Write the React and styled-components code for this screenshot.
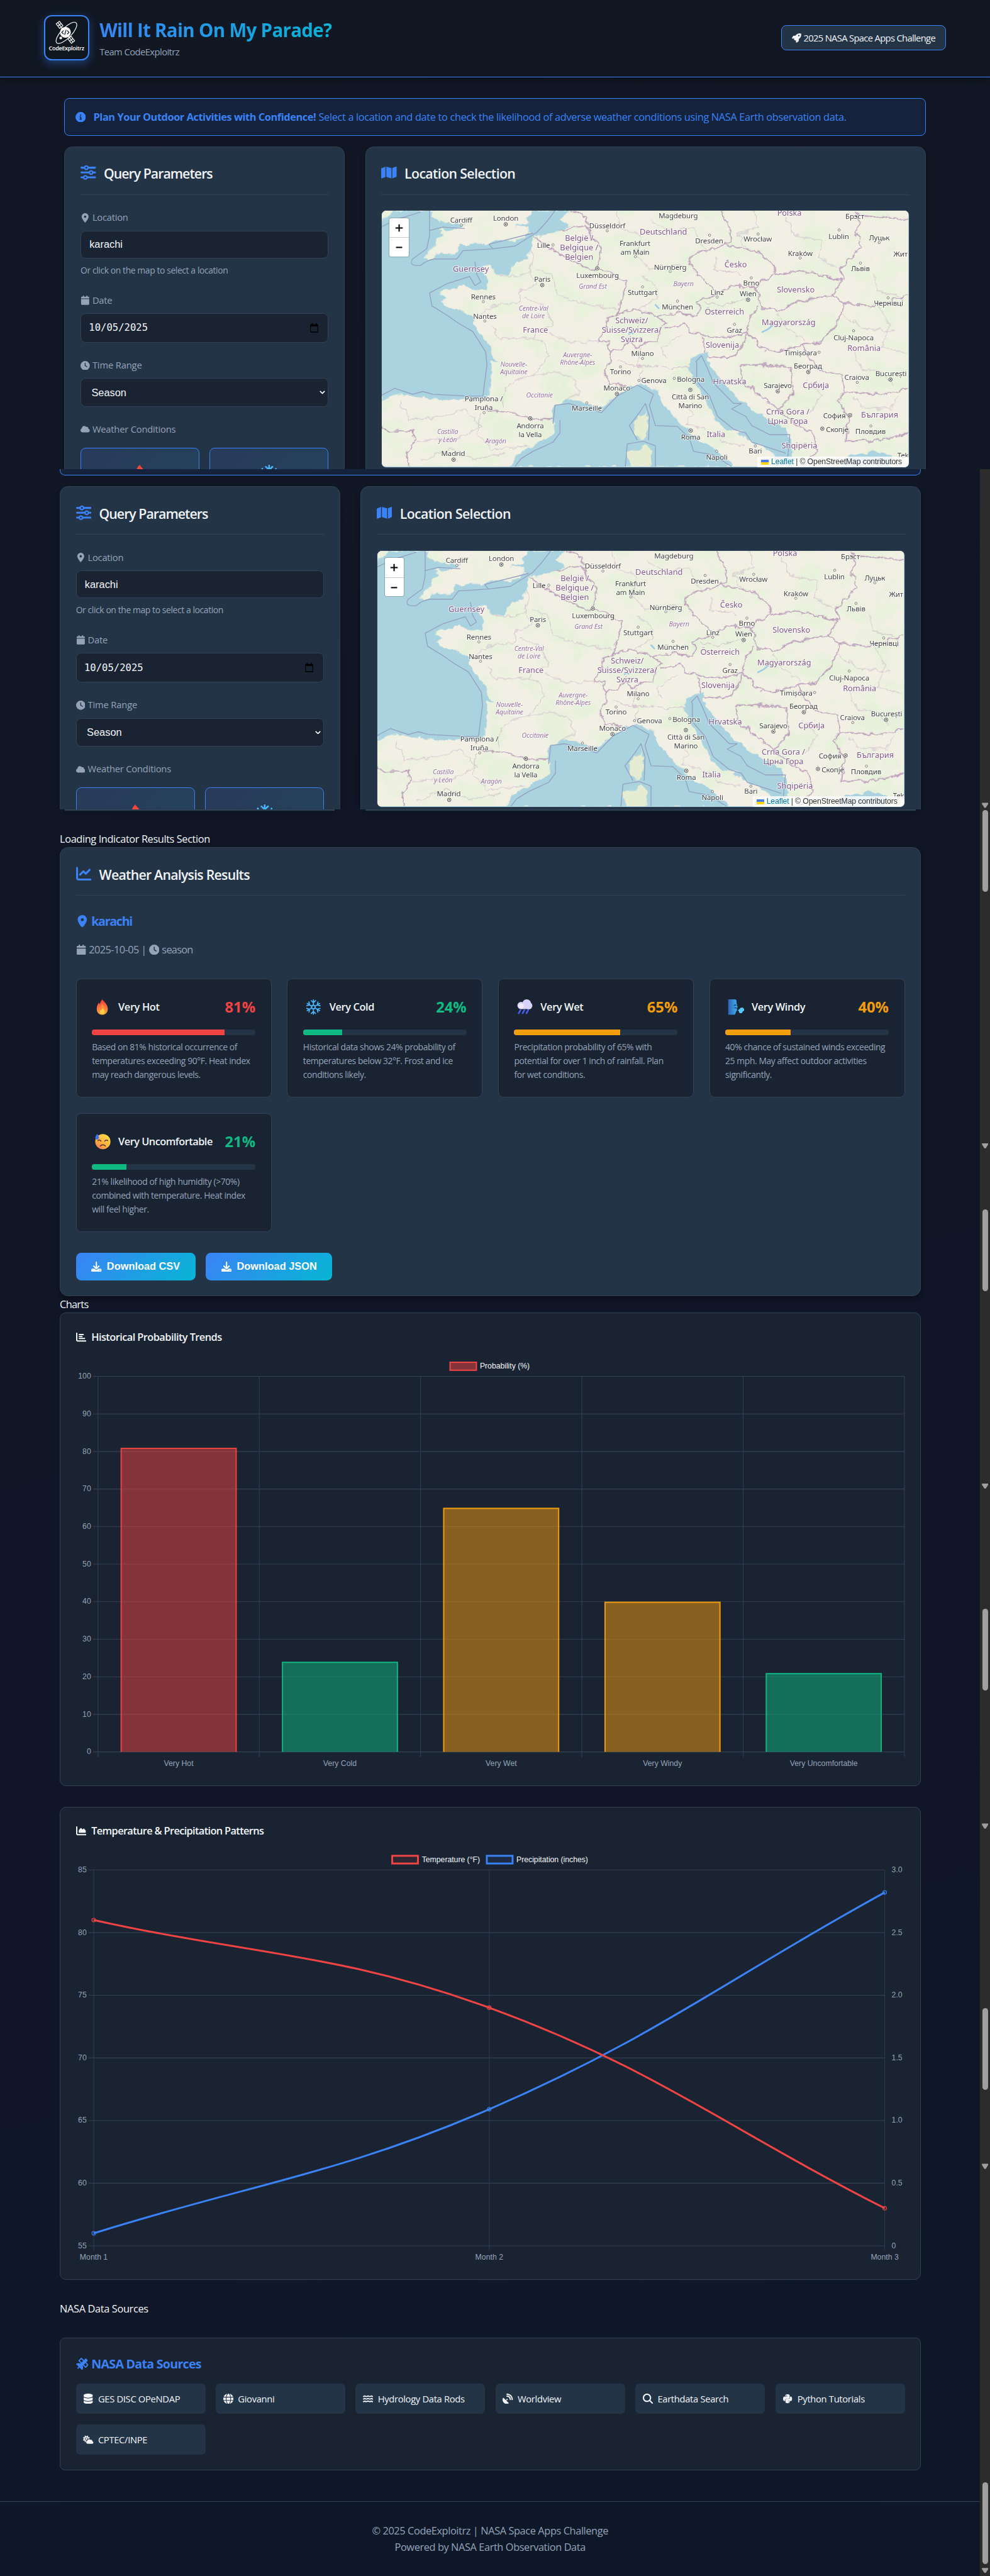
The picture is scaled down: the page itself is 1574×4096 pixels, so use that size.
import React from "react";
import styled, { createGlobalStyle } from "styled-components";
import {
  FaSliders, FaMap, FaLocationDot, FaCalendar, FaClock, FaCloud, FaRocket, FaCircleInfo,
  FaChartLine, FaDownload, FaChartBar, FaChartArea, FaSatellite, FaDatabase, FaGlobe,
  FaWater, FaSatelliteDish, FaMagnifyingGlass, FaPython, FaCloudSun,
} from "react-icons/fa6";

const c = {
  blue: "#3b82f6",
  cyan: "#06b6d4",
  card: "#243447",
  dark: "#1a2332",
  line: "#314256",
  text: "#f1f5f9",
  muted: "#94a3b8",
  red: "#ef4444",
  orange: "#f59e0b",
  green: "#10b981",
};
const sans = `"Open Sans", "Noto Sans", sans-serif`;
const arial = `"Liberation Sans", Arial, sans-serif`;

const Global = createGlobalStyle`
  *, *::before, *::after { box-sizing: border-box; }
  body { margin: 0; background: #0f1728; overflow: hidden; }
  h1, h2, h3, p { margin: 0; }
`;

const Page = styled.div`
  zoom: 0.81979;
  width: 1920px;
  height: 4997px;
  background: linear-gradient(165deg, #111824 0%, #101625 30%, #101628 70%, #0e1829 100%);
  color: ${c.text};
  font-family: ${sans};
  font-size: 20px;
  line-height: 32px;
  white-space: nowrap;
  svg.i { height: 1em; width: auto; flex: none; display: block; }
`;

const Text = styled.span`
  letter-spacing: ${(p) => p.$ls || 0}em;
`;

/* ---------- header ---------- */
const Header = styled.header`
  height: 150px;
  padding: 0 85px 2px;
  display: flex;
  align-items: center;
  background: #111824;
  border-bottom: 2px solid ${c.blue};
  box-shadow: 0 4px 14px rgba(0, 0, 0, 0.4);
  position: relative;
`;
const Logo = styled.div`
  width: 88px;
  height: 88px;
  border: 3px solid ${c.blue};
  border-radius: 15px;
  background: #0f1821;
  box-shadow: 0 5px 16px rgba(59, 130, 246, 0.35);
  display: flex;
  overflow: hidden;
`;
const Brand = styled.div`
  margin-left: 20px;
  flex: 1;
`;
const Title = styled.h1`
  width: max-content;
  font-size: 36px;
  line-height: 54px;
  font-weight: 700;
  letter-spacing: -0.0235em;
  background: linear-gradient(135deg, ${c.blue}, ${c.cyan});
  -webkit-background-clip: text;
  background-clip: text;
  color: transparent;
`;
const Team = styled.p`
  padding-top: 1px;
  font-size: 18px;
  line-height: 28px;
  letter-spacing: -0.038em;
  color: ${c.muted};
`;
const Badge = styled.div`
  display: flex;
  align-items: center;
  gap: 4px;
  width: 320px;
  height: 49px;
  padding: 0 20px;
  border: 1px solid ${c.blue};
  border-radius: 10px;
  background: ${c.card};
  font-size: 18px;
  letter-spacing: -0.045em;
`;

/* ---------- top capture ---------- */
const TopCapture = styled.div`
  height: 760px;
  overflow: hidden;
  padding: 40px 125px 0;
`;
const Banner = styled.div`
  height: 74px;
  display: flex;
  align-items: center;
  gap: 15px;
  padding: 0 20px;
  border: 1px solid ${c.blue};
  border-radius: 10px;
  background: #14223c;
  color: ${c.blue};
  margin-bottom: 20px;
`;
const Panels = styled.div`
  display: grid;
  grid-template-columns: 1fr 2fr;
  gap: 40px;
`;
const Card = styled.section`
  min-width: 0;
  height: ${(p) => (p.$h ? p.$h + "px" : "auto")};
  padding: 30px;
  border: 1px solid ${c.line};
  border-radius: 16px;
  background: ${c.card};
  box-shadow: 0 5px 8px rgba(0, 0, 0, 0.3);
`;
const CardHead = styled.h2`
  display: flex;
  align-items: flex-start;
  gap: 15px;
  height: 63px;
  margin-bottom: 29.7px;
  border-bottom: 2px solid ${c.line};
  font-size: 26px;
  line-height: 43px;
  font-weight: 600;
  svg.i { font-size: 30px; margin-top: 5px; color: ${c.blue}; }
`;
const Group = styled.div`
  margin-bottom: 29.5px;
`;
const Label = styled.div`
  display: flex;
  align-items: center;
  gap: 5px;
  margin-bottom: ${(p) => p.$mb || 10.6}px;
  font-size: 18px;
  line-height: 28.8px;
  font-weight: 500;
  color: ${c.muted};
`;
const Field = styled.div`
  display: flex;
  align-items: center;
  justify-content: space-between;
  height: ${(p) => p.$h}px;
  padding: 0 ${(p) => p.$r || 16}px 0 ${(p) => p.$l || 16}px;
  border: 1px solid ${c.line};
  border-radius: 10px;
  background: ${c.dark};
  font: ${(p) => (p.$mono ? `500 19px "DejaVu Sans Mono", monospace` : `20px ${arial}`)};
`;
const Hint = styled.p`
  margin-top: 9.7px;
  font-size: 17px;
  line-height: 27.2px;
  letter-spacing: -0.0295em;
  color: ${c.muted};
`;
const Conditions = styled.div`
  display: grid;
  grid-template-columns: 1fr 1fr;
  gap: 20px;
`;
const Condition = styled.div`
  height: 150px;
  display: flex;
  justify-content: center;
  padding-top: 32px;
  border: 1px solid ${c.blue};
  border-radius: 10px;
  background: linear-gradient(135deg, #283a5a, #23445b);
`;

/* ---------- map ---------- */
const MapFrame = styled.div`
  position: relative;
  height: 500px;
  border: 2px solid ${c.line};
  border-radius: 10px;
  background: #aad3df;
  overflow: hidden;
`;
const ZoomBox = styled.div`
  position: absolute;
  left: 13px;
  top: 13px;
  width: 40px;
  border: 2px solid rgba(0, 0, 0, 0.2);
  border-radius: 5px;
  background-clip: padding-box;
  background-color: #fff;
`;
const ZoomButton = styled.div`
  height: 37px;
  display: flex;
  align-items: center;
  justify-content: center;
  & + & { border-top: 1px solid #ccc; }
`;
const Credit = styled.div`
  position: absolute;
  right: 0;
  bottom: 0;
  height: 21px;
  width: 294px;
  padding: 0 6px 0 8px;
  display: flex;
  align-items: center;
  gap: 4px;
  background: rgba(255, 255, 255, 0.8);
  font: 15px/21px ${arial};
  letter-spacing: -0.012em;
  color: #333;
  a { color: #0078a8; }
`;

const SEA = [
  "M90,83L180,83L173,112L200,140L215,150L262,160L240,185L195,188L205,215L188,240L180,285L160,330L172,350L190,315L235,320L245,272L290,255L320,268L350,240L385,250L420,205L418,172L385,165L420,150L412,120L435,83L518,83L495,130L520,165L485,200L430,225L425,300L410,345L375,385L370,430L340,432L325,385L302,385L312,430L318,510L285,515L255,488L235,500L200,518L195,545L215,560L200,580L215,610L250,630L285,665L280,690L300,760L325,820L328,870L345,905L325,900L328,960L318,1080L300,1110L250,1108L200,1112L150,1095L90,1080L53,1115L53,130Z",
  "M372,1473L395,1400L440,1350L485,1285L480,1230L480,1160L515,1100L550,1115L570,1140L605,1145L640,1090L665,1050L690,1020L720,1040L740,1060L750,1120L780,1200L820,1285L850,1340L885,1375L900,1420L920,1440L925,1473Z",
  "M868,850L822,885L818,940L835,1020L850,1080L870,1150L885,1220L915,1275L955,1275L940,1300L990,1350L1030,1400L1030,1473L1075,1473L1078,1400L1070,1330L1060,1260L1020,1220L980,1170L930,1080L905,1020L885,960L864,900Z",
  "M1190,1473L1210,1430L1240,1400L1260,1410L1275,1385L1310,1400L1322,1425L1310,1473Z",
];
const ISLES = [
  "M712,1160L715,1200L716,1260L710,1310L700,1332L686,1300L682,1240L692,1200L708,1190Z",
  "M710,1345L725,1390L722,1473L672,1473L665,1400L690,1380Z",
];
const BORDERS = [
  "M430,225L460,260L480,300L540,370L575,400L610,410L665,470L650,560L642,640L620,660L610,720L590,800L620,790L620,850L625,900L605,950L620,1020L665,1040",
  "M490,190L560,165L580,230L600,290L590,400", "M520,83L560,110L570,165",
  "M642,640L690,620L740,660L790,640L840,650L845,600L840,580L890,530L850,450L820,370L830,320L905,270L925,250L915,150L900,83",
  "M905,270L960,290L985,300L1020,360L1035,420L1005,460L985,500L930,490L890,530",
  "M1035,430L1090,410L1140,430L1200,460L1180,540L1100,570L1050,620L1000,615L985,500",
  "M1205,460L1195,400L1250,280L1235,200L1245,140L1235,83", "M1245,110L1365,130",
  "M620,850L650,830L670,790L690,830L720,790L740,790L745,720L760,690L740,660",
  "M760,720L810,700L820,740L880,775L940,760L965,750L970,660L990,600",
  "M965,750L1010,840L1040,850L1100,810L1150,800L1185,700L1205,590L1180,540",
  "M850,770L860,870L910,885L935,870L965,760",
  "M945,920L1010,920L1070,930L1075,1000L1080,1080L1040,1160L1000,1100L950,1000L945,920",
  "M1100,810L1120,900L1150,950L1200,980L1205,1070L1300,1080L1365,1050",
  "M1205,590L1280,600L1330,560L1365,545",
  "M1205,1070L1190,1120L1215,1200L1210,1340L1320,1320L1365,1290",
  "M1040,1160L1080,1240L1120,1280L1140,1390L1100,1473",
  "M305,1160L360,1180L425,1210L497,1220",
  "M53,1255L70,1285L130,1275L135,1340L115,1400L120,1473",
];
const MARITIME = [
  "M172,83L172,220L165,290L130,345Q118,385 150,380Q165,350 185,345L240,345L255,300L330,290L385,275L440,200L465,140L485,83",
  "M53,170L90,130L150,90", "M172,190L205,172L260,180",
  "M285,360L290,430L300,470L285,490L272,440L215,480L172,530L178,600L215,650L245,695L280,740L312,850L315,920L305,1090L270,1090L180,1080L155,1065L130,1080L85,1048L53,1085",
  "M497,1220L497,1290L480,1340L430,1390L400,1430L385,1473",
  "M480,1240L485,1140L520,1130L600,1180L640,1090L690,1030L730,1080L720,1140L735,1250L790,1255L820,1320L830,1390L880,1410L925,1473",
  "M835,905L850,870L865,940L880,1020L930,1130L950,1130L925,1160L960,1200L975,1250L1020,1300L1070,1300L1065,1420",
  "M838,905L838,1010L870,1090L890,1200L930,1270L960,1290L975,1340L1060,1400",
  "M660,1473L665,1350L705,1335L735,1360L735,1473",
  "M690,1330L670,1250L695,1180L710,1130L720,1200L718,1330", "M330,290L320,265L430,205",
];
const REGIONS = [
  "M340,432L380,440L420,420L430,345L425,300", "M420,420L440,480L400,520L395,580L330,600L300,640",
  "M440,400L480,440L490,540L560,590L640,620", "M330,710L345,780L430,770L440,740L480,700L460,600L410,560",
  "M430,770L460,800L470,870L430,980L390,1000L360,1050L350,1150", "M470,750L520,800L590,790",
  "M430,980L490,960L530,990L545,1080L515,1100", "M700,440L740,500L740,560L690,620",
  "M640,83L650,180L700,220L690,330L720,400L800,380", "M720,130L760,190L830,180L860,300",
  "M980,83L990,180L940,210L960,280", "M1060,120L1080,210L1150,250L1140,340L1190,400",
  "M700,830L690,920L790,940L830,930", "M640,900L700,930L700,1010", "M760,880L750,830L800,760",
  "M100,1120L120,1220L200,1200L260,1160L300,1260L240,1320L140,1330", "M300,1180L290,1300L330,1380L420,1360",
  "M150,1440L220,1380L280,1430L360,1400", "M860,580L900,600L960,560", "M1040,640L1060,720L1110,790",
  "M1200,640L1250,720L1330,740", "M1230,860L1250,940L1300,960L1330,1040", "M1290,600L1320,700L1300,820L1360,860",
  "M1110,1000L1150,1080L1120,1180", "M1230,1090L1250,1150L1320,1160L1340,1090", "M1280,430L1290,520L1340,540",
  "M800,1130L830,1180L810,1240L860,1270", "M890,340L880,400L950,430", "M870,1270L900,1330L960,1360",
];
// [text, x, y, kind]: c = city, n = country, r = region
const LABELS = [
  ["Cardiff", 251, 134, "c"], ["London", 362, 124, "c"], ["Düsseldorf", 615, 166, "c"], ["Deutschland", 755, 200, "n"],
  ["Magdeburg", 792, 109, "c"], ["Polska", 1069, 95, "n"], ["Брэст", 1232, 113, "c"], ["België /", 545, 232, "n"],
  ["Belgique /", 545, 284, "n"], ["Belgien", 545, 337, "n"], ["Lille", 456, 269, "c"], ["Frankfurt", 684, 260, "c"],
  ["am Main", 684, 307, "c"], ["Dresden", 869, 246, "c"], ["Wrocław", 990, 236, "c"], ["Lublin", 1192, 221, "c"],
  ["Луцьк", 1293, 228, "c"], ["Kraków", 1096, 315, "c"], ["Жит", 1346, 317, "c"], ["Česko", 935, 378, "n"],
  ["Nürnberg", 772, 389, "c"], ["Львів", 1246, 397, "c"], ["Guernsey", 275, 402, "n"], ["Luxembourg", 591, 434, "c"],
  ["Paris", 453, 454, "c"], ["Grand Est", 579, 494, "r"], ["Bayern", 805, 479, "r"], ["Brno", 974, 475, "c"],
  ["Slovensko", 1085, 512, "n"], ["Stuttgart", 703, 528, "c"], ["Linz", 889, 527, "c"], ["Wien", 966, 532, "c"],
  ["Rennes", 306, 550, "c"], ["Чернівці", 1316, 586, "c"], ["München", 790, 604, "c"], ["Centre-Val", 431, 611, "r"],
  ["de Loire", 431, 654, "r"], ["Österreich", 907, 632, "n"], ["Nantes", 310, 656, "c"], ["Schweiz/", 676, 682, "n"],
  ["Suisse/Svizzera/", 676, 732, "n"], ["Svizra", 676, 784, "n"], ["Magyarország", 1067, 692, "n"], ["France", 436, 731, "n"],
  ["Graz", 932, 731, "c"], ["Cluj-Napoca", 1229, 773, "c"], ["Slovenija", 902, 812, "n"], ["România", 1255, 832, "n"],
  ["Timișoara", 1097, 854, "c"], ["Milano", 703, 858, "c"], ["Auvergne-", 541, 864, "r"], ["Rhône-Alpes", 541, 907, "r"],
  ["Nouvelle-", 382, 915, "r"], ["Aquitaine", 382, 957, "r"], ["Београд", 1115, 925, "c"], ["Torino", 648, 958, "c"],
  ["București", 1322, 967, "c"], ["Craiova", 1237, 988, "c"], ["Genova", 731, 1006, "c"], ["Bologna", 823, 997, "c"],
  ["Hrvatska", 920, 1010, "n"], ["Sarajevo", 1040, 1032, "c"], ["Србија", 1135, 1032, "n"], ["Monaco", 639, 1046, "c"],
  ["Occitanie", 446, 1084, "r"], ["Città di San", 822, 1094, "c"], ["Marino", 822, 1142, "c"], ["Pamplona /", 307, 1104, "c"],
  ["Iruña", 307, 1152, "c"], ["Marseille", 564, 1155, "c"], ["Crna Gora /", 1065, 1176, "n"], ["Црна Гора", 1065, 1228, "n"],
  ["София", 1181, 1197, "c"], ["България", 1294, 1192, "n"], ["Andorra", 423, 1250, "c"], ["la Vella", 423, 1298, "c"],
  ["Скопје", 1188, 1272, "c"], ["Пловдив", 1271, 1280, "c"], ["Castilla", 217, 1282, "r"], ["y León", 217, 1325, "r"],
  ["Roma", 823, 1313, "c"], ["Italia", 886, 1299, "n"], ["Aragón", 337, 1332, "r"], ["Shqipëria", 1094, 1360, "n"],
  ["Madrid", 231, 1400, "c"], ["Bari", 984, 1388, "c"], ["Napoli", 888, 1421, "c"], ["Tek", 1352, 1410, "c"],
];
const TOWNS = [
  [251, 161], [615, 192], [480, 269], [685, 333], [870, 216], [991, 210], [1193, 188], [1293, 256], [1096, 340], [772, 413],
  [1246, 368], [974, 448], [703, 497], [889, 552], [306, 577], [1315, 556], [790, 574], [310, 682], [932, 700], [1229, 735],
  [1143, 852], [703, 886], [648, 931], [1238, 1015], [694, 1005], [782, 994], [308, 1180], [564, 1127], [1272, 1252], [984, 1361], [888, 1390],
];
const CAPITALS = [
  [362, 157], [590, 396], [453, 487], [966, 567], [1116, 959], [1321, 1000], [1040, 1064], [639, 1078], [822, 1056],
  [1220, 1194], [423, 1211], [1151, 1267], [823, 1277], [232, 1435],
];
const KX = 0.7781;
const KY = 0.35714;
const px = (x) => (x - 53) * KX;
const py = (y) => (y - 83) * KY;
const scalePath = (d) => d.replace(/(-?\d+),(-?\d+)/g, (_, x, y) => `${px(+x).toFixed(1)},${py(+y).toFixed(1)}`);
const KIND = {
  c: { fill: "#444", fontSize: 14, letterSpacing: -0.15 },
  n: { fill: "#84588a", fontSize: 15.6 },
  r: { fill: "#9a74a0", fontSize: 13, fontStyle: "italic", letterSpacing: -0.2 },
};

function EuropeMap({ id }) {
  return (
    <svg width="1021" height="496" viewBox="0 0 1021 496" display="block">
      <defs>
        <filter id={id + "g"} x="0" y="0" width="100%" height="100%">
          <feTurbulence type="fractalNoise" baseFrequency="0.016 0.02" numOctaves="5" seed="8" />
          <feColorMatrix values="0 0 0 0 0.79  0 0 0 0 0.88  0 0 0 0 0.70  4 0 0 0 -1.7" />
        </filter>
        <filter id={id + "j"} x="-5%" y="-5%" width="110%" height="110%">
          <feTurbulence type="fractalNoise" baseFrequency="0.07" numOctaves="3" seed="4" />
          <feDisplacementMap in="SourceGraphic" scale="13" xChannelSelector="R" yChannelSelector="G" />
        </filter>
      </defs>
      <rect width="1021" height="496" fill="#f2f0e4" />
      <rect width="1021" height="496" filter={`url(#${id}g)`} opacity="0.85" />
      <g filter={`url(#${id}j)`}>
        {REGIONS.map((d) => <path key={d} d={scalePath(d)} fill="none" stroke="#c3a9c4" strokeWidth="1.1" opacity="0.8" />)}
        {BORDERS.map((d) => <path key={d} d={scalePath(d)} fill="none" stroke="#b496b5" strokeWidth="2" />)}
        {SEA.map((d) => <path key={d} d={scalePath(d)} fill="#aad3df" />)}
        {ISLES.map((d) => <path key={d} d={scalePath(d)} fill="#e6ecd2" />)}
      </g>
      <rect x="-8" y="20" width="16" height="340" fill="#aad3df" />
      {MARITIME.map((d) => <path key={d} d={scalePath(d)} fill="none" stroke="#93a0c1" strokeWidth="1.6" strokeLinejoin="round" />)}
      <path d="M737 236l12-6 12-10M538 190l-8-8M478 240l6-4 4 3" stroke="#9cc9e8" strokeWidth="3" fill="none" />
      {TOWNS.map(([x, y]) => <circle key={x + "-" + y} cx={px(x)} cy={py(y)} r="2.2" fill="#fff" stroke="#666" strokeWidth="1" />)}
      {CAPITALS.map(([x, y]) => (
        <g key={x + "-" + y}>
          <circle cx={px(x)} cy={py(y)} r="3.4" fill="#fff" stroke="#444" strokeWidth="1.2" />
          <circle cx={px(x)} cy={py(y)} r="1.4" fill="#444" />
        </g>
      ))}
      <g fontFamily={`"Noto Sans", sans-serif`} textAnchor="middle" stroke="#fff" strokeOpacity="0.65" strokeWidth="2.6" paintOrder="stroke" strokeLinejoin="round">
        {LABELS.map(([t, x, y, k]) => <text key={t} x={px(x)} y={py(y) + 5} {...KIND[k]}>{t}</text>)}
      </g>
    </svg>
  );
}

/* ---------- emoji drawings ---------- */
const Flame = ({ s = 30 }) => (
  <svg width={s * 0.8} height={s} viewBox="0 0 24 30" preserveAspectRatio="none">
    <defs>
      <linearGradient id="fl" x1="0" y1="0" x2="0" y2="1">
        <stop offset="0" stopColor="#f4383a" /><stop offset=".55" stopColor="#f9753c" /><stop offset="1" stopColor="#fbb03b" />
      </linearGradient>
    </defs>
    <path d="M12 0C14 4 22 9 22.500 18C22.800 25 18 30 12 30C5.500 30 1 25.500 1 18.500C1 13 3 9 5.500 6.500C6 8 6.200 8.500 7 9.500C7.500 6 9.500 2.500 12 0Z" fill="url(#fl)" />
    <path d="M12 9c2 4 6 6.500 6 12 0 5-3 8-6.500 8S5 26 5 21.500c0-3 1.200-5 2.500-6.500.5 1 .8 1.500 1.500 2 .2-3 1.200-5.500 3-8Z" fill="#fb8a3c" />
    <path d="M13 17c1 3 3.500 4 3.500 7.500 0 2.500-2 4.500-4.800 4.500S7 27 7 24.500c0-1.800.8-3 1.500-4 .5.8 1 1 1.500 1 .5-1.800 1.500-3.500 3-4.500Z" fill="#ffd046" />
  </svg>
);
const Snow = ({ s = 30 }) => (
  <svg width={s} height={s} viewBox="-15 -15 30 30">
    <defs>
      <linearGradient id="sn" gradientUnits="userSpaceOnUse" x1="-14" y1="0" x2="14" y2="0">
        <stop offset="0" stopColor="#3f8ef5" /><stop offset="1" stopColor="#52dcfb" />
      </linearGradient>
    </defs>
    {[0, 60, 120, 180, 240, 300].map((a) => (
      <path key={a} transform={`rotate(${a})`} d="M0 -4V-14M-4.200 -12.500L0 -8.500L4.200 -12.500M-3.500 -2L0 -4L3.500 -2" stroke="url(#sn)" strokeWidth="2.100" strokeLinecap="round" fill="none" />
    ))}
  </svg>
);
const Rain = () => (
  <svg width="32" height="30" viewBox="0 0 32 30">
    <g fill="#d9d2fb">
      <circle cx="20" cy="8.500" r="8.500" /><circle cx="9" cy="12" r="7" /><circle cx="24" cy="12.500" r="7" /><rect x="7" y="10" width="18" height="9" rx="4" />
    </g>
    <circle cx="9.500" cy="13" r="5" fill="#efeaff" />
    <path d="M8 21l-3.500 6M15.500 21l-3.500 6M23 21l-3.500 6" stroke="#4a5bf0" strokeWidth="3.200" strokeLinecap="round" />
  </svg>
);
const Wind = () => (
  <svg width="32" height="30" viewBox="0 0 32 30">
    <defs>
      <linearGradient id="wd" x1="0" y1="0" x2="1" y2="0"><stop offset="0" stopColor="#2f63b8" /><stop offset="1" stopColor="#3fb4ee" /></linearGradient>
    </defs>
    <path d="M1 0h13q3 0 3 4v4q2 1 1 4l1.500 3.500-2 1q1 3 0 6-2 1-2 4l-2 3.500H1Z" fill="url(#wd)" />
    <path d="M12 12q3-2 5 0M13 16q2 1.500 4 0" stroke="#1f3f82" strokeWidth="1.600" fill="none" />
    <path d="M19 21q3-1 4-2.500 1-2 4-2.500 4.500 0 5 4 0 3-3 3.500-.5 3.500-4 3.500-3 0-3-2-1-.500 0-2Z" fill="#55c9f7" />
  </svg>
);
const Sweat = () => (
  <svg width="32" height="30" viewBox="0 0 32 30">
    <defs>
      <linearGradient id="sw" x1="0" y1="1" x2=".7" y2="0"><stop offset="0" stopColor="#f2627d" /><stop offset=".35" stopColor="#fba53f" /><stop offset="1" stopColor="#ffd94a" /></linearGradient>
    </defs>
    <circle cx="16.500" cy="15" r="14.800" fill="url(#sw)" />
    <path d="M7 13q3-2.500 6 1M20 14q3-3.500 6-1" stroke="#5a2f33" strokeWidth="1.800" fill="none" strokeLinecap="round" />
    <path d="M11.500 23.500q5-5 10 0" stroke="#5a2f33" strokeWidth="2" fill="none" strokeLinecap="round" />
    <path d="M5.500 0C8 3 9.500 5.500 9 8c-.5 2-2 3-3.800 3S1.500 9.500 1.800 7C2 4.500 4 2.500 5.500 0Z" fill="#3f74f0" />
  </svg>
);

/* ---------- scrolling captures ---------- */
const Lower = styled.div`
  display: flex;
`;
const Main = styled.div`
  width: 1901px;
`;
const Track = styled.div`
  width: 19px;
  background: #2c2c2c;
  display: flex;
  flex-direction: column;
  align-items: center;
`;
const Thumb = styled.div`
  width: 11px;
  height: 158.5px;
  margin-top: ${(p) => p.$mt}px;
  border-radius: 6px;
  background: #9f9f9f;
`;
const Arrow = styled.div`
  width: 12px;
  height: 10px;
  margin-top: ${(p) => p.$mt}px;
  background: #9f9f9f;
  clip-path: polygon(0 0, 100% 0, 100% 25%, 60% 100%, 40% 100%, 0 25%);
`;
const Column = styled.div`
  width: 1670px;
  margin-left: 116px;
`;
const MidCapture = styled.div`
  height: 660px;
  overflow: hidden;
  margin: 0 -10px;
  padding: 0 10px;
`;
const BannerTail = styled.div`
  height: 12.7px;
  margin-bottom: 20.3px;
  border: 1px solid ${c.blue};
  border-top: 0;
  border-radius: 0 0 10px 10px;
  background: #14223c;
`;
const PanelTails = styled(Panels)`
  height: 2px;
  margin-bottom: 39.5px;
`;
const PanelTail = styled.div`
  margin: 0 10px;
  background: ${c.line};
  box-shadow: 0 4px 6px rgba(0, 0, 0, 0.3);
`;
const Stray = styled.p`
  line-height: 32px;
  letter-spacing: ${(p) => p.$ls}em;
`;

const Place = styled.h3`
  display: flex;
  align-items: center;
  gap: 6px;
  margin-bottom: ${(p) => p.$mb}px;
  font-size: 24px;
  line-height: 38.4px;
  font-weight: 700;
  color: ${c.blue};
`;
const Meta = styled.p`
  display: flex;
  align-items: center;
  gap: 5px;
  margin-bottom: 40.5px;
  color: ${c.muted};
`;
const Results = styled.div`
  display: grid;
  grid-template-columns: repeat(4, 1fr);
  gap: 30px;
`;
const Result = styled.article`
  height: 231px;
  padding: 30px;
  border: 1px solid ${c.line};
  border-radius: 10px;
  background: ${c.dark};
`;
const ResultHead = styled.div`
  display: flex;
  align-items: center;
  height: 48px;
  margin-bottom: 20px;
`;
const Glyph = styled.span`
  width: 41px;
  display: flex;
  justify-content: center;
`;
const ResultName = styled.span`
  flex: 1;
  margin-left: 10px;
  font-weight: 600;
  letter-spacing: ${(p) => p.$ls}em;
`;
const Percent = styled.span`
  font-size: 29px;
  font-weight: 700;
  color: ${(p) => p.$c};
`;
const Bar = styled.div`
  height: 10px;
  border-radius: 5px;
  background: ${c.card};
  overflow: hidden;
  margin-bottom: 10px;
`;
const Fill = styled.div`
  height: 100%;
  width: ${(p) => p.$v}%;
  background: ${(p) => p.$c};
`;
const Desc = styled.p`
  white-space: pre-line;
  font-size: 17px;
  line-height: 27.2px;
  letter-spacing: -0.031em;
  color: ${c.muted};
`;
const Buttons = styled.div`
  display: flex;
  gap: 20px;
  margin-top: 40px;
`;
const Download = styled.button`
  display: flex;
  align-items: center;
  gap: 10px;
  height: 53px;
  padding: 0 30px;
  border: 0;
  border-radius: 10px;
  background: linear-gradient(135deg, ${c.blue}, ${c.cyan});
  color: #fff;
  font: bold 20px ${arial};
`;
const ChartCard = styled.section`
  height: 918px;
  padding: 30px;
  margin-bottom: 40px;
  border: 1px solid ${c.line};
  border-radius: 12px;
  background: ${c.dark};
  & > svg { display: block; }
`;
const ChartTitle = styled.h3`
  display: flex;
  align-items: center;
  gap: 10px;
  margin-bottom: 20px;
  font-size: 20px;
  line-height: 32px;
  font-weight: 600;
`;
const Sources = styled.section`
  height: 257.5px;
  padding: 30px;
  margin: 40px 0 60px;
  border: 1px solid ${c.line};
  border-radius: 10px;
  background: ${c.dark};
`;
const SourceGrid = styled.div`
  display: grid;
  grid-template-columns: repeat(6, 1fr);
  gap: 20px;
`;
const Source = styled.a`
  display: flex;
  align-items: center;
  gap: 9px;
  height: 59px;
  padding: 0 14px;
  border-radius: 8px;
  background: ${c.card};
  font-size: 18px;
  letter-spacing: -0.022em;
  svg.i { font-size: 20px; }
`;
const Footer = styled.footer`
  height: 146px;
  padding-top: 40px;
  border-top: 1px solid ${c.line};
  text-align: center;
  letter-spacing: -0.0255em;
  color: ${c.muted};
`;

/* ---------- charts ---------- */
const BARS = [
  ["Very Hot", 81, c.red], ["Very Cold", 24, c.green], ["Very Wet", 65, c.orange], ["Very Windy", 40, c.orange], ["Very Uncomfortable", 21, c.green],
];
const grid = { stroke: "#304153", strokeWidth: 1.3 };
const tick = { fill: c.muted, fontSize: 15 };

function BarChart() {
  const L = 42.5, R = 1606.4, T = 39.6, B = 768, step = (R - L) / 5;
  const y = (v) => B - ((B - T) * v) / 100;
  return (
    <svg width="1608" height="804" viewBox="0 0 1608 804" fontFamily={arial}>
      {[0, 1, 2, 3, 4, 5, 6, 7, 8, 9, 10].map((i) => (
        <g key={i}>
          <line x1={L - 10} x2={R} y1={y(i * 10)} y2={y(i * 10)} {...grid} />
          <text x={29} y={y(i * 10) + 4.5} textAnchor="end" {...tick}>{i * 10}</text>
        </g>
      ))}
      {[0, 1, 2, 3, 4, 5].map((i) => <line key={i} x1={L + i * step} x2={L + i * step} y1={T} y2={B + 10} {...grid} />)}
      {BARS.map(([n, v, col], i) => {
        const cx = L + (i + 0.5) * step;
        return (
          <g key={n}>
            <rect x={cx - 112.6} width="225.2" y={y(v)} height={B - y(v)} fill={col} fillOpacity="0.5" />
            <path d={`M${cx - 111.4} ${B}V${y(v) + 1.2}H${cx + 111.4}V${B}`} fill="none" stroke={col} strokeWidth="2.5" strokeOpacity="0.9" />
            <text x={cx} y="794.800" textAnchor="middle" {...tick}>{n}</text>
          </g>
        );
      })}
      <rect x="725.300" y="12.300" width="51" height="15.500" fill={c.red} fillOpacity="0.5" stroke={c.red} strokeWidth="2.500" />
      <text x="783" y="24.700" fill={c.text} fontSize="15" letterSpacing="-0.05">Probability (%)</text>
    </svg>
  );
}

// Cardinal spline through three points, tension 0.4
function curve(p) {
  const [a, b, d] = p;
  const t = 0.4;
  const d1 = Math.hypot(b[0] - a[0], b[1] - a[1]);
  const d2 = Math.hypot(d[0] - b[0], d[1] - b[1]);
  const f1 = (t * d1) / (d1 + d2);
  const f2 = (t * d2) / (d1 + d2);
  const v = [d[0] - a[0], d[1] - a[1]];
  const start = [a[0] + t * (b[0] - a[0]), a[1] + t * (b[1] - a[1])];
  const end = [d[0] - t * (d[0] - b[0]), d[1] - t * (d[1] - b[1])];
  return `M${a}C${start} ${b[0] - f1 * v[0]},${b[1] - f1 * v[1]} ${b}C${b[0] + f2 * v[0]},${b[1] + f2 * v[1]} ${end} ${d}`;
}

function LineChart() {
  const L = 34.2, R = 1568.2, T = 39.3, B = 768.5, M = (L + R) / 2;
  const yl = (v) => B - ((B - T) * (v - 55)) / 30;
  const yr = (v) => B - ((B - T) * v) / 3;
  const temp = [[L, yl(81)], [M, yl(74)], [R, yl(58)]];
  const rain = [[L, yr(0.1)], [M, yr(1.09)], [R, yr(2.82)]];
  return (
    <svg width="1608" height="804" viewBox="0 0 1608 804" fontFamily={arial}>
      {[0, 1, 2, 3, 4, 5, 6].map((i) => {
        const y = B - ((B - T) * i) / 6;
        return (
          <g key={i}>
            <line x1={L - 10} x2={R} y1={y} y2={y} {...grid} />
            <text x={20.4} y={y + 4.5} textAnchor="end" {...tick}>{55 + i * 5}</text>
            <text x={1581.6} y={y + 4.5} {...tick}>{i ? (i / 2).toFixed(1) : "0"}</text>
          </g>
        );
      })}
      {[L, M, R].map((x, i) => (
        <g key={i}>
          <line x1={x} x2={x} y1={T} y2={B + 9} {...grid} strokeOpacity="0.8" />
          <text x={x} y="795" textAnchor="middle" {...tick}>{"Month " + (i + 1)}</text>
        </g>
      ))}
      {[[rain, c.blue], [temp, c.red]].map(([p, col]) => (
        <g key={col} stroke={col}>
          <path d={curve(p)} fill="none" strokeWidth="3.750" />
          {p.map((q) => <circle key={q[0]} cx={q[0]} cy={q[1]} r="3.700" fill={col} fillOpacity="0.2" strokeWidth="1.250" />)}
        </g>
      ))}
      <rect x="613" y="12" width="50" height="15" fill={c.red} fillOpacity="0.1" stroke={c.red} strokeWidth="3.600" />
      <text x="670.600" y="24.500" fill={c.text} fontSize="15" letterSpacing="-0.05">Temperature (°F)</text>
      <rect x="796.500" y="12" width="50" height="15" fill={c.blue} fillOpacity="0.1" stroke={c.blue} strokeWidth="3.600" />
      <text x="854" y="24.500" fill={c.text} fontSize="15" letterSpacing="-0.05">Precipitation (inches)</text>
    </svg>
  );
}

/* ---------- panels ---------- */
function QueryPanels({ id, h }) {
  return (
    <Panels>
      <Card $h={h}>
        <CardHead><FaSliders className="i" /><Text $ls={-0.046}>Query Parameters</Text></CardHead>
        <Group>
          <Label><FaLocationDot className="i" /><Text $ls={-0.017}>Location</Text></Label>
          <Field $h={54.4}>karachi</Field>
          <Hint>Or click on the map to select a location</Hint>
        </Group>
        <Group>
          <Label><FaCalendar className="i" /><Text $ls={-0.017}>Date</Text></Label>
          <Field $h={57.4} $mono $l={15} $r={19}>
            10/05/2025
            <svg width="16" height="18" viewBox="0 0 16 18"><path d="M3 0h2v2h6V0h2v2h1.500Q16 2 16 3.500v13q0 1.500-1.500 1.500h-13Q0 18 0 16.500v-13Q0 2 1.500 2H3ZM1.700 6v10.300h12.600V6Z" fill="#000" fillRule="evenodd" /></svg>
          </Field>
        </Group>
        <Group>
          <Label><FaClock className="i" /><Text $ls={-0.011}>Time Range</Text></Label>
          <Field $h={55.4} $l={20} $r={5}>
            Season
            <svg width="11" height="7" viewBox="0 0 11 7"><path d="M1 1l4.500 4.500L10 1" stroke="#fff" strokeWidth="2" fill="none" /></svg>
          </Field>
        </Group>
        <Label $mb={20.6}><FaCloud className="i" /><Text $ls={-0.015}>Weather Conditions</Text></Label>
        <Conditions>
          <Condition><Flame s={46} /></Condition>
          <Condition><Snow s={46} /></Condition>
        </Conditions>
      </Card>
      <Card $h={h}>
        <CardHead><FaMap className="i" /><Text $ls={-0.03}>Location Selection</Text></CardHead>
        <MapFrame>
          <EuropeMap id={id} />
          <ZoomBox>
            <ZoomButton><svg width="16" height="16" viewBox="0 0 16 16"><path d="M8 1v14M1 8h14" stroke="#000" strokeWidth="2.500" /></svg></ZoomButton>
            <ZoomButton><svg width="16" height="16" viewBox="0 0 16 16"><path d="M2 9h12" stroke="#000" strokeWidth="2.500" /></svg></ZoomButton>
          </ZoomBox>
          <Credit>
            <svg width="15" height="10" viewBox="0 0 15 10"><path fill="#4c7be1" d="M0 0h15v5H0z" /><path fill="#ffd500" d="M0 5h15v5H0z" /></svg>
            <a>Leaflet</a> | © OpenStreetMap contributors
          </Credit>
        </MapFrame>
      </Card>
    </Panels>
  );
}

const RESULTS = [
  [<Flame key="e" />, "Very Hot", 81, c.red, -0.023, "Based on 81% historical occurrence of\ntemperatures exceeding 90°F. Heat index\nmay reach dangerous levels."],
  [<Snow key="e" />, "Very Cold", 24, c.green, -0.023, "Historical data shows 24% probability of\ntemperatures below 32°F. Frost and ice\nconditions likely."],
  [<Rain key="e" />, "Very Wet", 65, c.orange, -0.023, "Precipitation probability of 65% with\npotential for over 1 inch of rainfall. Plan\nfor wet conditions."],
  [<Wind key="e" />, "Very Windy", 40, c.orange, -0.023, "40% chance of sustained winds exceeding\n25 mph. May affect outdoor activities\nsignificantly."],
  [<Sweat key="e" />, "Very Uncomfortable", 21, c.green, -0.032, "21% likelihood of high humidity (>70%)\ncombined with temperature. Heat index\nwill feel higher."],
];
const SOURCES = [
  [FaDatabase, "GES DISC OPeNDAP"], [FaGlobe, "Giovanni"], [FaWater, "Hydrology Data Rods"], [FaSatelliteDish, "Worldview"],
  [FaMagnifyingGlass, "Earthdata Search"], [FaPython, "Python Tutorials"], [FaCloudSun, "CPTEC/INPE"],
];

function LogoArt() {
  return (
    <svg width="82" height="82" viewBox="0 0 82 82">
      <ellipse cx="41" cy="32" rx="10" ry="27" transform="rotate(44 41 32)" fill="none" stroke="#fff" strokeWidth="1.400" />
      <g transform="rotate(-38 39 31)" fill="none" stroke="#fff" strokeWidth="1.500">
        <path d="M39 18v26" />
        <path d="M35 7h8v11h-8zM35 12.500h8M39 7v11M35 44h8v11h-8zM35 49.500h8M39 44v11" />
      </g>
      <circle cx="39" cy="31" r="10.500" fill="#fff" />
      <path d="M35.500 27.500l-3.500 3.500 3.500 3.500M42.500 27.500L46 31l-3.500 3.500M40.500 26l-3 10" fill="none" stroke="#0f1821" strokeWidth="1.500" />
      <circle cx="30" cy="42" r="2.600" fill="#fff" />
      <text x="41" y="65.500" textAnchor="middle" fontFamily={sans} fontWeight="600" fontSize="11" fill="#fff" letterSpacing="-0.35">CodeExploitrz</text>
    </svg>
  );
}

export default function App() {
  return (
    <Page>
      <Global />
      <Header>
        <Logo><LogoArt /></Logo>
        <Brand>
          <Title>Will It Rain On My Parade?</Title>
          <Team>Team CodeExploitrz</Team>
        </Brand>
        <Badge><FaRocket className="i" />2025 NASA Space Apps Challenge</Badge>
      </Header>
      <TopCapture>
        <Banner>
          <FaCircleInfo className="i" />
          <span>
            <Text as="b" $ls={-0.0275}>Plan Your Outdoor Activities with Confidence!</Text>{" "}
            <Text $ls={-0.0215}>Select a location and date to check the likelihood of adverse weather conditions using NASA Earth observation data.</Text>
          </span>
        </Banner>
        <QueryPanels id="a" h={700} />
      </TopCapture>
      <Lower>
        <Main>
          <Column>
            <MidCapture>
              <BannerTail />
              <QueryPanels id="b" h={700} />
            </MidCapture>
            <PanelTails><PanelTail /><PanelTail /></PanelTails>
            <Stray $ls={-0.025}>Loading Indicator Results Section</Stray>
            <Card>
              <CardHead><FaChartLine className="i" /><Text $ls={-0.036}>Weather Analysis Results</Text></CardHead>
              <Place $mb={20}><FaLocationDot className="i" /><Text $ls={-0.067}>karachi</Text></Place>
              <Meta>
                <FaCalendar className="i" /><Text $ls={-0.036}>2025-10-05 |</Text>
                <FaClock className="i" /><Text $ls={-0.047}>season</Text>
              </Meta>
              <Results>
                {RESULTS.map(([e, n, v, col, ls, d]) => (
                  <Result key={n}>
                    <ResultHead><Glyph>{e}</Glyph><ResultName $ls={ls}>{n}</ResultName><Percent $c={col}>{v}%</Percent></ResultHead>
                    <Bar><Fill $v={v} $c={col} /></Bar>
                    <Desc>{d}</Desc>
                  </Result>
                ))}
              </Results>
              <Buttons>
                <Download><FaDownload className="i" />Download CSV</Download>
                <Download><FaDownload className="i" />Download JSON</Download>
              </Buttons>
            </Card>
            <Stray $ls={-0.045}>Charts</Stray>
            <ChartCard>
              <ChartTitle><FaChartBar className="i" /><Text $ls={-0.035}>Historical Probability Trends</Text></ChartTitle>
              <BarChart />
            </ChartCard>
            <ChartCard>
              <ChartTitle><FaChartArea className="i" /><Text $ls={-0.04}>Temperature &amp; Precipitation Patterns</Text></ChartTitle>
              <LineChart />
            </ChartCard>
            <Stray $ls={-0.0225}>NASA Data Sources</Stray>
            <Sources>
              <Place $mb={19}><FaSatellite className="i" /><Text $ls={-0.038}>NASA Data Sources</Text></Place>
              <SourceGrid>
                {SOURCES.map(([Icon, n]) => <Source key={n}><Icon className="i" />{n}</Source>)}
              </SourceGrid>
            </Sources>
          </Column>
          <Footer>
            <p>© 2025 CodeExploitrz | NASA Space Apps Challenge</p>
            <p>Powered by NASA Earth Observation Data</p>
          </Footer>
        </Main>
        <Track>
          <Arrow $mt={647} /><Thumb $mt={4} />
          <Arrow $mt={488} /><Thumb $mt={118} />
          <Arrow $mt={373.5} /><Thumb $mt={232.5} />
          <Arrow $mt={258.5} /><Thumb $mt={348} />
          <Arrow $mt={143.5} /><Thumb $mt={608} />
          <Arrow $mt={7.5} />
        </Track>
      </Lower>
    </Page>
  );
}
